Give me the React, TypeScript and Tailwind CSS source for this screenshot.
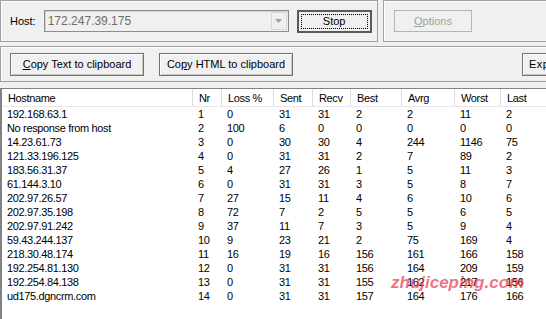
import React from "react";

const rows: string[][] = [
  ["192.168.63.1", "1", "0", "31", "31", "2", "2", "11", "2"],
  ["No response from host", "2", "100", "6", "0", "0", "0", "0", "0"],
  ["14.23.61.73", "3", "0", "30", "30", "4", "244", "1146", "75"],
  ["121.33.196.125", "4", "0", "31", "31", "2", "7", "89", "2"],
  ["183.56.31.37", "5", "4", "27", "26", "1", "5", "11", "3"],
  ["61.144.3.10", "6", "0", "31", "31", "3", "5", "8", "7"],
  ["202.97.26.57", "7", "27", "15", "11", "4", "6", "10", "6"],
  ["202.97.35.198", "8", "72", "7", "2", "5", "5", "6", "5"],
  ["202.97.91.242", "9", "37", "11", "7", "3", "5", "9", "4"],
  ["59.43.244.137", "10", "9", "23", "21", "2", "75", "169", "4"],
  ["218.30.48.174", "11", "16", "19", "16", "156", "161", "166", "158"],
  ["192.254.81.130", "12", "0", "31", "31", "156", "164", "209", "159"],
  ["192.254.84.138", "13", "0", "31", "31", "155", "162", "217", "156"],
  ["ud175.dgncrm.com", "14", "0", "31", "31", "157", "164", "176", "166"],
];

const headers = ["Hostname", "Nr", "Loss %", "Sent", "Recv", "Best", "Avrg", "Worst", "Last"];

const cols = "grid grid-cols-[191px_29px_52px_39px_38px_51px_53px_46px_60px]";

const Btn = ({ children, className = "" }: { children: React.ReactNode; className?: string }) => (
  <div
    className={`shrink-0 h-[23px] flex items-center justify-center border border-[#707070] bg-[#f0f0f0] shadow-[inset_1px_1px_0_#ffffff,inset_-1px_-1px_0_#c8c8c8] ${className}`}
  >
    {children}
  </div>
);

export default function App() {
  return (
    <div className="relative w-[546px] h-[319px] overflow-hidden bg-[#f0f0f0] text-[11px] text-black font-['Liberation_Sans',Arial,sans-serif] leading-none">
      {/* top panels */}
      <div className="flex gap-[5px] h-[42px]">
        <div className="w-[378px] shrink-0 border border-[#a0a0a0] shadow-[inset_1px_1px_0_#ffffff] flex items-center pl-[9px]">
          <span>Host:</span>
          <div className="ml-[8px] w-[245px] h-[22px] border border-[#8c8c8c] shadow-[inset_1px_1px_0_#d4d4d4] bg-[#f0f0f0] flex items-center justify-between pl-[3px] pr-[1px]">
            <span className="text-[#6d6d6d] text-[12px]">172.247.39.175</span>
            <div className="w-[16px] h-[18px] border border-[#d8d8d8] flex items-center justify-center">
              <svg width="7" height="4" viewBox="0 0 7 4">
                <path d="M0 0h7L3.5 4z" fill="#a0a0a0" />
              </svg>
            </div>
          </div>
          <div className="ml-[8px] w-[75px] h-[23px] border-2 border-[#5a5a5a] p-[2px]">
            <div className="w-full h-full border border-dotted border-black flex items-center justify-center">
              Stop
            </div>
          </div>
        </div>
        <div className="w-[200px] shrink-0 border border-[#a0a0a0] shadow-[inset_1px_1px_0_#ffffff] flex items-center pl-[10px]">
          <div className="w-[78px] h-[22px] border border-[#b4b4b4] flex items-center justify-center text-[#a0a0a0]">
            <span>
              <span className="underline">O</span>ptions
            </span>
          </div>
        </div>
      </div>

      {/* second panel */}
      <div className="mt-[4px] h-[36px] w-[560px] border border-[#a0a0a0] shadow-[inset_1px_1px_0_#ffffff] flex items-center pl-[9px]">
        <Btn className="w-[134px]">
          <span>
            <span className="underline">C</span>opy Text to clipboard
          </span>
        </Btn>
        <Btn className="w-[134px] ml-[15px]">
          <span>
            Co<span className="underline">p</span>y HTML to clipboard
          </span>
        </Btn>
        <Btn className="w-[60px] ml-[229px] justify-start pl-[6px]">
          <span className="tracking-[0.5px]">Export</span>
        </Btn>
      </div>

      {/* list */}
      <div className="mt-[6px] w-[560px] h-[240px] bg-white border-t border-l-2 border-[#828282] tracking-[-0.35px]">
        <div className={`${cols} h-[18px] bg-white`}>
          {headers.map((h) => (
            <div key={h} className="flex items-center pl-[6px] pt-[1px] border-r border-[#dcdcdc] border-b border-b-[#e8e8e8]">
              {h}
            </div>
          ))}
        </div>
        <div>
          {rows.map((r, i) => (
            <div key={i} className={`${cols} h-[14px]`}>
              {r.map((c, j) => (
                <div key={j} className="flex items-center pl-[5px] whitespace-nowrap">
                  {c}
                </div>
              ))}
            </div>
          ))}
        </div>
      </div>

      {/* watermark */}
      <div className="absolute left-[391px] top-[274px] text-[17px] font-bold italic text-[#e8334a]/70 whitespace-nowrap">
        zhujiceping.com
      </div>
    </div>
  );
}
